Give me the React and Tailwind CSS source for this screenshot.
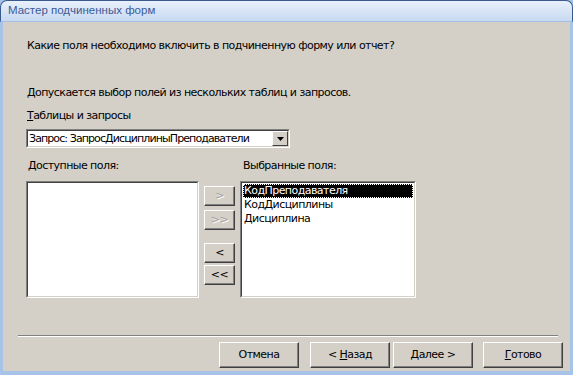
const available = [];
const chosen = ['КодПреподавателя', 'КодДисциплины', 'Дисциплина'];

const font = { fontFamily: '"DejaVu Sans", "Liberation Sans", sans-serif', letterSpacing: '-0.55px' };

function MoveButton({ label, disabled }) {
    return (
        <div className="w-[31px] h-[20px] bg-[#d4d0c8] border border-t-white border-l-white border-r-[#404040] border-b-[#404040] shadow-[inset_-1px_-1px_0_#808080] flex items-center justify-center">
            <span className={disabled ? 'text-[#a0a0a0] [text-shadow:1px_1px_0_#ffffff]' : 'text-black'}>{label}</span>
        </div>
    );
}

function WizButton({ children }) {
    return (
        <div className="w-[80px] h-[26px] bg-[#d4d0c8] border border-t-white border-l-white border-r-[#404040] border-b-[#404040] shadow-[inset_-1px_-1px_0_#808080] flex items-center justify-center text-black whitespace-pre">
            {children}
        </div>
    );
}

function ListBox({ items, className }) {
    return (
        <div className={`h-[117px] bg-white border border-t-[#808080] border-l-[#808080] border-r-white border-b-white ${className}`}>
            <div className="h-full border border-t-[#404040] border-l-[#404040] border-r-[#d4d0c8] border-b-[#d4d0c8] pt-[1px] pl-[1px]">
                {items.map((it, i) => (
                    <div
                        key={it}
                        className={i === 0 ? 'h-[14px] leading-[14px] bg-black text-white pl-[1px] outline-1 outline-dotted outline-white -outline-offset-1 mr-[1px]' : 'h-[14px] leading-[14px] text-black pl-[1px]'}
                    >
                        {it}
                    </div>
                ))}
            </div>
        </div>
    );
}

export default function App() {
    return (
        <div className="w-[573px] h-[375px] bg-[#a8c3e8] flex flex-col text-[11px] text-black" style={font}>
            <div className="h-[22px] shrink-0 rounded-t-[7px] border-t border-l border-r border-[#3b5b8f] bg-gradient-to-b from-[#e8f0fb] to-[#c7d9f1] flex items-center pl-[7px] border-b border-b-[#a3bfe6]">
                <span className="text-[#3b5a95] text-[11.5px] tracking-normal" style={{ fontFamily: '"Liberation Sans", sans-serif' }}>Мастер подчиненных форм</span>
            </div>
            <div className="flex-1 mx-[3px] mb-[4px] bg-[#d4d0c8] flex flex-col">
                <div className="pl-[24px] pt-[17px] leading-[13px]">Какие поля необходимо включить в подчиненную форму или отчет?</div>
                <div className="pl-[24px] pt-[34px] leading-[13px]">Допускается выбор полей из нескольких таблиц и запросов.</div>
                <div className="pl-[24px] pt-[10px] leading-[13px]"><span className="underline">Т</span>аблицы и запросы</div>
                <div className="ml-[23px] mt-[7px] w-[264px] h-[19px] bg-white border border-t-[#808080] border-l-[#808080] border-r-white border-b-white">
                    <div className="h-full border border-t-[#404040] border-l-[#404040] border-r-[#d4d0c8] border-b-[#d4d0c8] flex items-center justify-between pl-[1px]">
                        <span className="leading-[13px] whitespace-nowrap tracking-[-0.9px]">Запрос: ЗапросДисциплиныПреподаватели</span>
                        <div className="w-[16px] h-[15px] bg-[#d4d0c8] border border-t-white border-l-white border-r-[#404040] border-b-[#404040] flex items-center justify-center">
                            <svg width="7" height="4" viewBox="0 0 7 4"><path d="M0 0h7L3.5 4z" fill="#000" /></svg>
                        </div>
                    </div>
                </div>
                <div className="flex mt-[11px] leading-[13px]">
                    <div className="pl-[25px] w-[240px]">Доступные поля:</div>
                    <div>Выбранные поля:</div>
                </div>
                <div className="flex mt-[9px] pl-[23px]">
                    <ListBox items={available} className="w-[173px]" />
                    <div className="flex flex-col ml-[5px] mr-[5px] pt-[5px]">
                        <MoveButton label=">" disabled />
                        <div className="h-[4px]" />
                        <MoveButton label=">>" disabled />
                        <div className="h-[13px]" />
                        <MoveButton label="<" />
                        <div className="h-[2px]" />
                        <MoveButton label="<<" />
                    </div>
                    <ListBox items={chosen} className="w-[176px]" />
                </div>
                <div className="ml-[15px] mr-[12px] mt-[37px] h-[2px] border-t border-t-[#808080] border-b border-b-white" />
                <div className="flex mt-[5px] pl-[216px]">
                    <WizButton>Отмена</WizButton>
                    <div className="w-[11px]" />
                    <WizButton>{'< '}<span className="underline">Н</span>азад</WizButton>
                    <div className="w-[3px]" />
                    <WizButton><span className="underline">Д</span>{'алее >'}</WizButton>
                    <div className="w-[10px]" />
                    <WizButton><span className="underline">Г</span>отово</WizButton>
                </div>
            </div>
        </div>
    );
}
